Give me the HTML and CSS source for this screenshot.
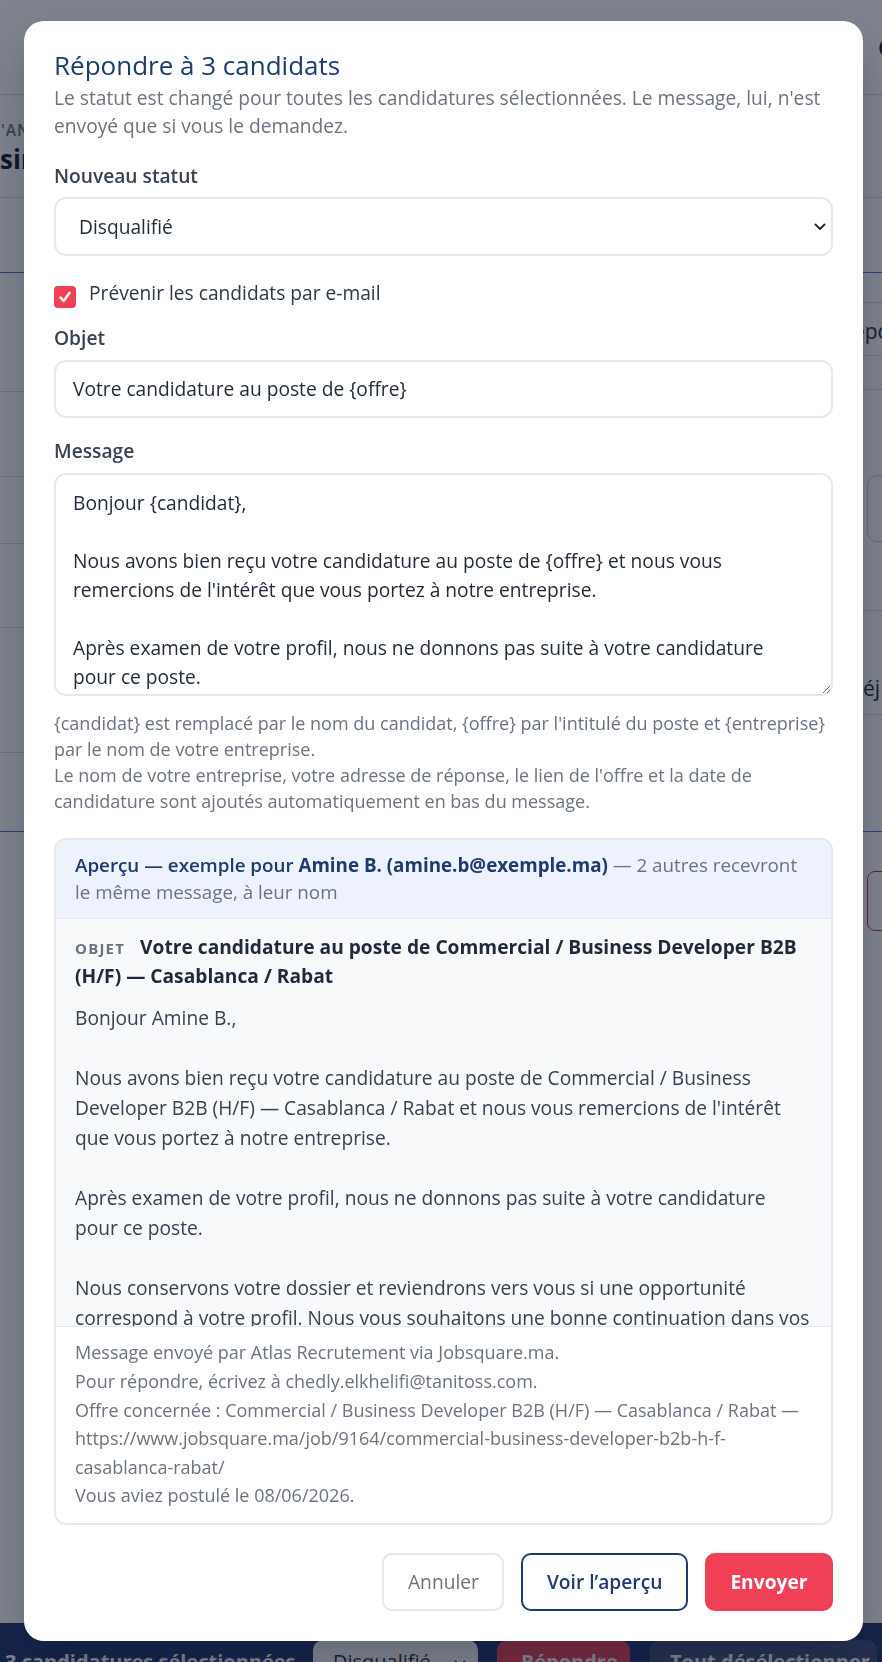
FILE: index.html
```html
<!DOCTYPE html>
<html lang="fr">
<head>
<meta charset="utf-8">
<title>Répondre à 3 candidats</title>
<link rel="stylesheet" href="styles.css">
</head>
<body>
<div class="page">
  <header class="topbar"><span class="topbar-user">Chedly</span></header>
  <section class="jobhead">
    <div class="eyebrow">'ANNONCE</div>
    <div class="jobtitle">sir</div>
  </section>
  <nav class="tabs"></nav>
  <section class="content">
    <div class="col col-left">
      <div class="lrow h119"></div>
      <div class="lrow h85"></div>
      <div class="lrow h67"></div>
      <div class="lrow h84"></div>
      <div class="lrow h125"></div>
    </div>
    <div class="col col-right">
      <div class="rrow h30"></div>
      <div class="rrow h53 rtext rtext-a">Répondu</div>
      <div class="rrow h34"></div>
      <div class="rrow h221"><span class="rbox"></span></div>
      <div class="rrow h104 rtext rtext-low">Réj</div>
    </div>
  </section>
  <section class="lower"><span class="red-outline"></span></section>
  <footer class="bottombar">
    <span class="bb-count">3 candidatures sélectionnées</span>
    <span class="bb-select">Disqualifié<svg class="bb-chev" width="12" height="8" viewBox="0 0 12 8" aria-hidden="true"><path d="M1.5 1.5 6 6l4.5-4.5" fill="none" stroke="#1f2937" stroke-width="1.8" stroke-linecap="round" stroke-linejoin="round"/></svg></span>
    <span class="bb-reply">Répondre</span>
    <span class="bb-clear">Tout désélectionner</span>
  </footer>
</div>

<div class="backdrop">
  <div class="modal" role="dialog" aria-labelledby="mtitle">
    <h2 class="modal-title" id="mtitle">Répondre à 3 candidats</h2>
    <p class="modal-sub">Le statut est changé pour toutes les candidatures sélectionnées. Le message, lui, n'est envoyé que si vous le demandez.</p>

    <label class="field-label" for="statut">Nouveau statut</label>
    <div class="select-wrap">
      <select id="statut" class="select"><option>Disqualifié</option></select>
      <svg class="chev" width="12" height="8" viewBox="0 0 12 8" aria-hidden="true"><path d="M1.5 1.5 6 6l4.5-4.5" fill="none" stroke="#1f2937" stroke-width="1.9" stroke-linecap="round" stroke-linejoin="round"/></svg>
    </div>

    <label class="check-row">
      <span class="checkbox"><svg width="16" height="16" viewBox="0 0 16 16" aria-hidden="true"><path d="M3.6 8.6l3 3.4L12.6 3.8" fill="none" stroke="#fff" stroke-width="2.4" stroke-linecap="round" stroke-linejoin="round"/></svg></span>
      <span class="check-text">Prévenir les candidats par e-mail</span>
    </label>

    <label class="field-label" for="objet">Objet</label>
    <input id="objet" class="input" type="text" value="Votre candidature au poste de {offre}">

    <label class="field-label" for="msg">Message</label>
    <textarea id="msg" class="textarea">
Bonjour {candidat},

Nous avons bien reçu votre candidature au poste de {offre} et nous vous remercions de l'intérêt que vous portez à notre entreprise.

Après examen de votre profil, nous ne donnons pas suite à votre candidature pour ce poste.

Nous conservons votre dossier et reviendrons vers vous si une opportunité correspond à votre profil. Nous vous souhaitons une bonne continuation dans vos recherches.

Cordialement,
{entreprise}</textarea>

    <p class="hint">{candidat} est remplacé par le nom du candidat, {offre} par l'intitulé du poste et {entreprise} par le nom de votre entreprise.<br>Le nom de votre entreprise, votre adresse de réponse, le lien de l'offre et la date de candidature sont ajoutés automatiquement en bas du message.</p>

    <div class="preview">
      <div class="preview-head"><span class="ph-lead">Aperçu — exemple pour <b>Amine B. (amine.b@exemple.ma)</b></span> — 2 autres recevront le même message, à leur nom</div>
      <div class="preview-body">
        <div class="preview-subject"><span class="obj-tag">OBJET</span> <strong>Votre candidature au poste de Commercial / Business Developer B2B (H/F) — Casablanca / Rabat</strong></div>
        <div class="preview-text">Bonjour Amine B.,

Nous avons bien reçu votre candidature au poste de Commercial / Business Developer B2B (H/F) — Casablanca / Rabat et nous vous remercions de l'intérêt que vous portez à notre entreprise.

Après examen de votre profil, nous ne donnons pas suite à votre candidature pour ce poste.

Nous conservons votre dossier et reviendrons vers vous si une opportunité correspond à votre profil. Nous vous souhaitons une bonne continuation dans vos recherches.

Cordialement,
Atlas Recrutement</div>
      </div>
      <div class="preview-foot">Message envoyé par Atlas Recrutement via Jobsquare.ma.<br>Pour répondre, écrivez à chedly.elkhelifi@tanitoss.com.<br>Offre concernée : Commercial / Business Developer B2B (H/F) — Casablanca / Rabat — https://www.jobsquare.ma/job/9164/commercial-business-developer-b2b-h-f-casablanca-rabat/<br>Vous aviez postulé le 08/06/2026.</div>
    </div>

    <div class="actions">
      <button class="btn btn-ghost" type="button">Annuler</button>
      <button class="btn btn-outline" type="button">Voir l’aperçu</button>
      <button class="btn btn-primary" type="button">Envoyer</button>
    </div>
  </div>
</div>
</body>
</html>
```

FILE: styles.css
```css
* { box-sizing: border-box; }
html, body { margin: 0; padding: 0; }
body {
  width: 882px;
  height: 1662px;
  overflow: hidden;
  position: relative;
  background: #ffffff;
  font-family: "Open Sans", "DejaVu Sans", sans-serif;
  color: #0f172a;
}

/* ---------- background page ---------- */
.page { height: 1662px; display: flex; flex-direction: column; }
.topbar {
  height: 95px; flex: none;
  border-bottom: 1px solid #d6dae2;
  display: flex; align-items: center;
}
.topbar-user {
  margin-left: auto; margin-right: -68px; width: 72px;
  font-size: 22px; font-weight: 600; color: #1e293b;
}
.jobhead { height: 103px; flex: none; border-bottom: 1px solid #d6dae2; padding-top: 24px; }
.eyebrow { font-size: 15.6px; line-height: 22px; letter-spacing: .06em; font-weight: 600; color: #64748b; padding-left: 1px; }
.jobtitle { font-size: 26px; line-height: 34px; font-weight: 700; color: #0f172a; margin-top: 1px; }
.tabs { height: 75px; flex: none; border-bottom: 1px solid #4f6fd6; }
.content {
  height: 559px; flex: none;
  display: grid; grid-template-columns: 440px 442px;
  border-bottom: 1px solid #4f6fd6;
}
.col { display: flex; flex-direction: column; }
.lrow, .rrow { border-bottom: 1px solid #d6dae2; flex: none; }
.h119 { height: 119px; } .h85 { height: 85px; } .h67 { height: 67px; }
.h84 { height: 84px; } .h125 { height: 125px; } .h30 { height: 30px; }
.h53 { height: 53px; } .h34 { height: 34px; } .h221 { height: 221px; }
.h104 { height: 104px; }
.rtext { padding-left: 410px; font-size: 21px; color: #1e293b; display: flex; align-items: center; white-space: nowrap; }
.rtext-a { padding-left: 400px; padding-top: 3px; }
.rtext-low { align-items: flex-end; padding-bottom: 12px; }
.rbox {
  display: block; margin: 85px 0 0 427px; width: 60px; height: 67px;
  border: 1px solid #c3c8d2; border-radius: 10px;
}
.lower { height: 791px; flex: none; padding: 39px 0 0 867px; }
.red-outline { display: block; width: 40px; height: 60px; border: 1px solid #c0304a; border-radius: 8px; }
.bottombar {
  flex: none; height: 90px;
  background: #1e336e;
  display: flex; align-items: flex-start;
  padding: 17px 0 0 5px;
  color: #fff; font-size: 20px; font-weight: 700; white-space: nowrap;
}
.bb-count { width: 308px; padding-top: 8px; }
.bb-select {
  width: 165px; height: 50px; background: #fff; color: #1e293b; border-radius: 10px;
  font-weight: 400; padding: 8px 12px 0 20px;
  display: flex; align-items: flex-start; justify-content: space-between;
}
.bb-chev { margin-top: 12px; }
.bb-reply { width: 133px; height: 50px; margin-left: 19px; background: #f0405a; border-radius: 10px; padding: 8px 0 0 24px; }
.bb-clear { width: 227px; height: 50px; margin-left: 20px; background: #404d78; border-radius: 10px; padding: 8px 0 0 20px; }

/* ---------- overlay + modal ---------- */
.backdrop { position: fixed; inset: 0; background: rgba(15, 23, 42, .53); }
.modal {
  position: absolute; top: 21px; left: 24px;
  width: 839px;
  background: #fff;
  border-radius: 20px;
  padding: 28px 30px 30px;
  box-shadow: 0 20px 50px rgba(15, 23, 42, .25);
}
.modal-title { margin: 0 0 2.5px; font-size: 26px; line-height: 32px; font-weight: 500; color: #1e3a6e; }
.modal-sub { margin: 0 0 24.3px; font-size: 19.2px; line-height: 28px; color: #6b7280; }

.field-label { display: block; font-size: 19.2px; line-height: 24px; font-weight: 600; color: #374151; margin-bottom: 9.5px; }

.select-wrap { position: relative; }
.select {
  display: block; width: 100%; height: 59px;
  appearance: none; -webkit-appearance: none;
  border: 2px solid #e5e7eb; border-radius: 12px; background: #fff;
  padding: 0 40px 0 23px;
  font: 400 19.2px/24px "Open Sans", sans-serif; color: #1f2937;
}
.chev { position: absolute; right: 7px; top: 26px; }

.check-row { display: flex; align-items: flex-start; gap: 13px; margin-top: 27px; }
.checkbox {
  width: 22px; height: 22px; flex: none; margin-top: 2.5px;
  background: #ef4056; border-radius: 4px;
  display: flex; align-items: center; justify-content: center;
}
.check-text { font-size: 19.2px; line-height: 20px; color: #2d3748; }
.check-row + .field-label { margin-top: 18.5px; }

.input {
  display: block; width: 100%; height: 58px;
  border: 2px solid #e5e7eb; border-radius: 12px; background: #fff;
  padding: 0 17px;
  font: 400 19.2px/24px "Open Sans", sans-serif; color: #1f2937;
}
.input + .field-label { margin-top: 21.5px; }

.textarea {
  display: block; width: 100%; height: 223px;
  border: 2px solid #e5e7eb; border-radius: 12px; background: #fff;
  padding: 13px 26px 13px 17px;
  font: 400 19.2px/29px "Open Sans", sans-serif; color: #1f2937;
  resize: vertical;
  overflow: auto; scrollbar-width: none;
}

.hint { margin: 14.5px 0 23.5px; font-size: 18px; line-height: 26px; color: #6b7280; }

.preview { border: 2px solid #e5e7eb; border-radius: 12px; overflow: hidden; }
.preview-head {
  background: #eef2fc;
  padding: 12px 19px;
  font-size: 18.8px; line-height: 27px; color: #6b7280;
  border-bottom: 1px solid #e5e7eb;
}
.ph-lead { color: #1e3a6e; font-weight: 600; }
.ph-lead b { font-weight: 700; }
.preview-body {
  background: #f8f9fb;
  height: 408px;
  padding: 14.5px 19px 0;
  overflow: auto; scrollbar-width: none;
  border-bottom: 1px solid #e5e7eb;
}
.preview-subject { font-size: 19.2px; line-height: 28px; color: #1f2937; }
.preview-subject strong { font-weight: 700; }
.obj-tag { font-size: 15px; font-weight: 700; letter-spacing: 1.2px; color: #6b7280; margin-right: 10px; }
.preview-text { margin-top: 13px; white-space: pre-wrap; font-size: 19.2px; line-height: 30px; color: #374151; }
.preview-foot {
  background: #fff;
  padding: 11.6px 19px 12.6px;
  font-size: 18px; line-height: 28.6px; color: #6b7280;
}

.actions { display: flex; justify-content: flex-end; gap: 17px; margin-top: 28px; }
.btn {
  height: 58px; padding: 0 23.5px;
  border-radius: 10px; border: 2px solid transparent;
  font: 400 19.2px/24px "Open Sans", sans-serif;
  cursor: pointer; background: #fff;
}
.btn-ghost { border-color: #e5e7eb; color: #6b7280; }
.btn-outline { border-color: #1e3a6e; color: #1e3a6e; font-weight: 600; }
.btn-primary { background: #ef4056; border-color: #ef4056; color: #fff; font-weight: 700; }
```
